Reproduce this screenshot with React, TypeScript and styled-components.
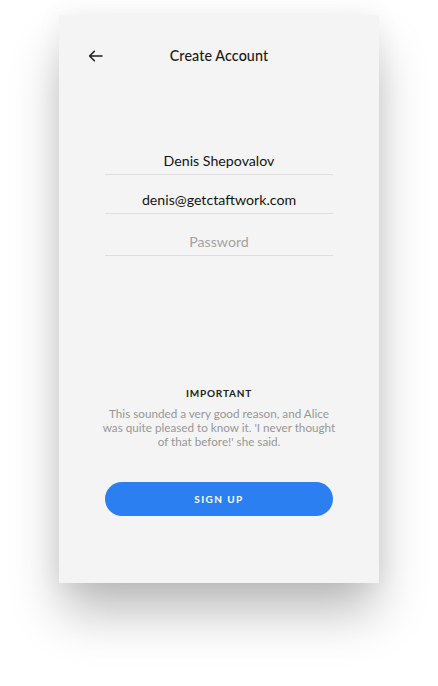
import styled, { createGlobalStyle } from 'styled-components';

const GlobalStyle = createGlobalStyle`
  html, body {
    margin: 0;
    padding: 0;
    background: #ffffff;
  }
  body {
    font-family: Lato, 'Open Sans', sans-serif;
  }
`;

const Page = styled.div`
  width: 438px;
  height: 686px;
  padding-top: 15px;
  box-sizing: border-box;
  overflow: hidden;
`;

const Card = styled.div`
  width: 320px;
  height: 568px;
  margin: 0 auto;
  background: #f4f4f4;
  box-shadow: 0px 32px 48px -4px rgba(0, 0, 0, 0.27), 0px 0px 24px rgba(0, 0, 0, 0.06);
  display: flex;
  flex-direction: column;
  padding-bottom: 67px;
  box-sizing: border-box;
`;

const Header = styled.div`
  height: 80px;
  display: flex;
  align-items: center;
  justify-content: center;
  position: relative;
`;

const BackButton = styled.button`
  position: absolute;
  left: 28px;
  top: 34px;
  width: 16px;
  height: 14px;
  padding: 0;
  border: none;
  background: none;
  display: flex;
  align-items: center;
  justify-content: center;
  color: #1c1c1c;
`;

const Title = styled.h1`
  margin: 0;
  font-size: 14.3px;
  font-weight: 500;
  color: #1a1a1a;
  letter-spacing: 0.1px;
`;

const Form = styled.div`
  width: 228px;
  margin: 56px auto 0;
  display: flex;
  flex-direction: column;
`;

const Field = styled.div<{ $top: number; $muted?: boolean }>`
  margin-top: ${(p) => p.$top}px;
  padding-bottom: 3px;
  border-bottom: 1px solid #dedede;
  text-align: center;
  font-size: 14.2px;
  line-height: 20px;
  color: ${(p) => (p.$muted ? '#a3a3a3' : '#141414')};
`;

const Info = styled.div`
  margin-top: auto;
  width: 236px;
  align-self: center;
  text-align: center;
`;

const InfoTitle = styled.div`
  font-size: 10px;
  line-height: 14px;
  font-weight: 700;
  letter-spacing: 0.8px;
  color: #222222;
`;

const InfoText = styled.p`
  margin: 6px 0 0;
  font-size: 11.7px;
  line-height: 14px;
  color: #979797;
`;

const SignUpButton = styled.button`
  margin: 34px auto 0;
  width: 228px;
  height: 34px;
  border: none;
  border-radius: 17px;
  background: #2b7ff0;
  color: #ffffff;
  font-family: Lato, sans-serif;
  font-size: 10px;
  font-weight: 700;
  letter-spacing: 1.4px;
`;

const BackArrow = () => (
  <svg width="15" height="12" viewBox="0 0 15 12" fill="none">
    <path d="M14 6H1.6M6.4 1.2L1.6 6l4.8 4.8" stroke="currentColor" strokeWidth="1.5" strokeLinecap="round" strokeLinejoin="round" />
  </svg>
);

const App = (): JSX.Element => {
  return (
    <Page>
      <GlobalStyle />
      <Card>
        <Header>
          <BackButton aria-label="Back">
            <BackArrow />
          </BackButton>
          <Title>Create Account</Title>
        </Header>
        <Form>
          <Field $top={0}>Denis Shepovalov</Field>
          <Field $top={15}>denis@getctaftwork.com</Field>
          <Field $top={18} $muted>
            Password
          </Field>
        </Form>
        <Info>
          <InfoTitle>IMPORTANT</InfoTitle>
          <InfoText>
            This sounded a very good reason, and Alice was quite pleased to know it. 'I never thought of that
            before!' she said.
          </InfoText>
        </Info>
        <SignUpButton>SIGN UP</SignUpButton>
      </Card>
    </Page>
  );
};

export default App;
